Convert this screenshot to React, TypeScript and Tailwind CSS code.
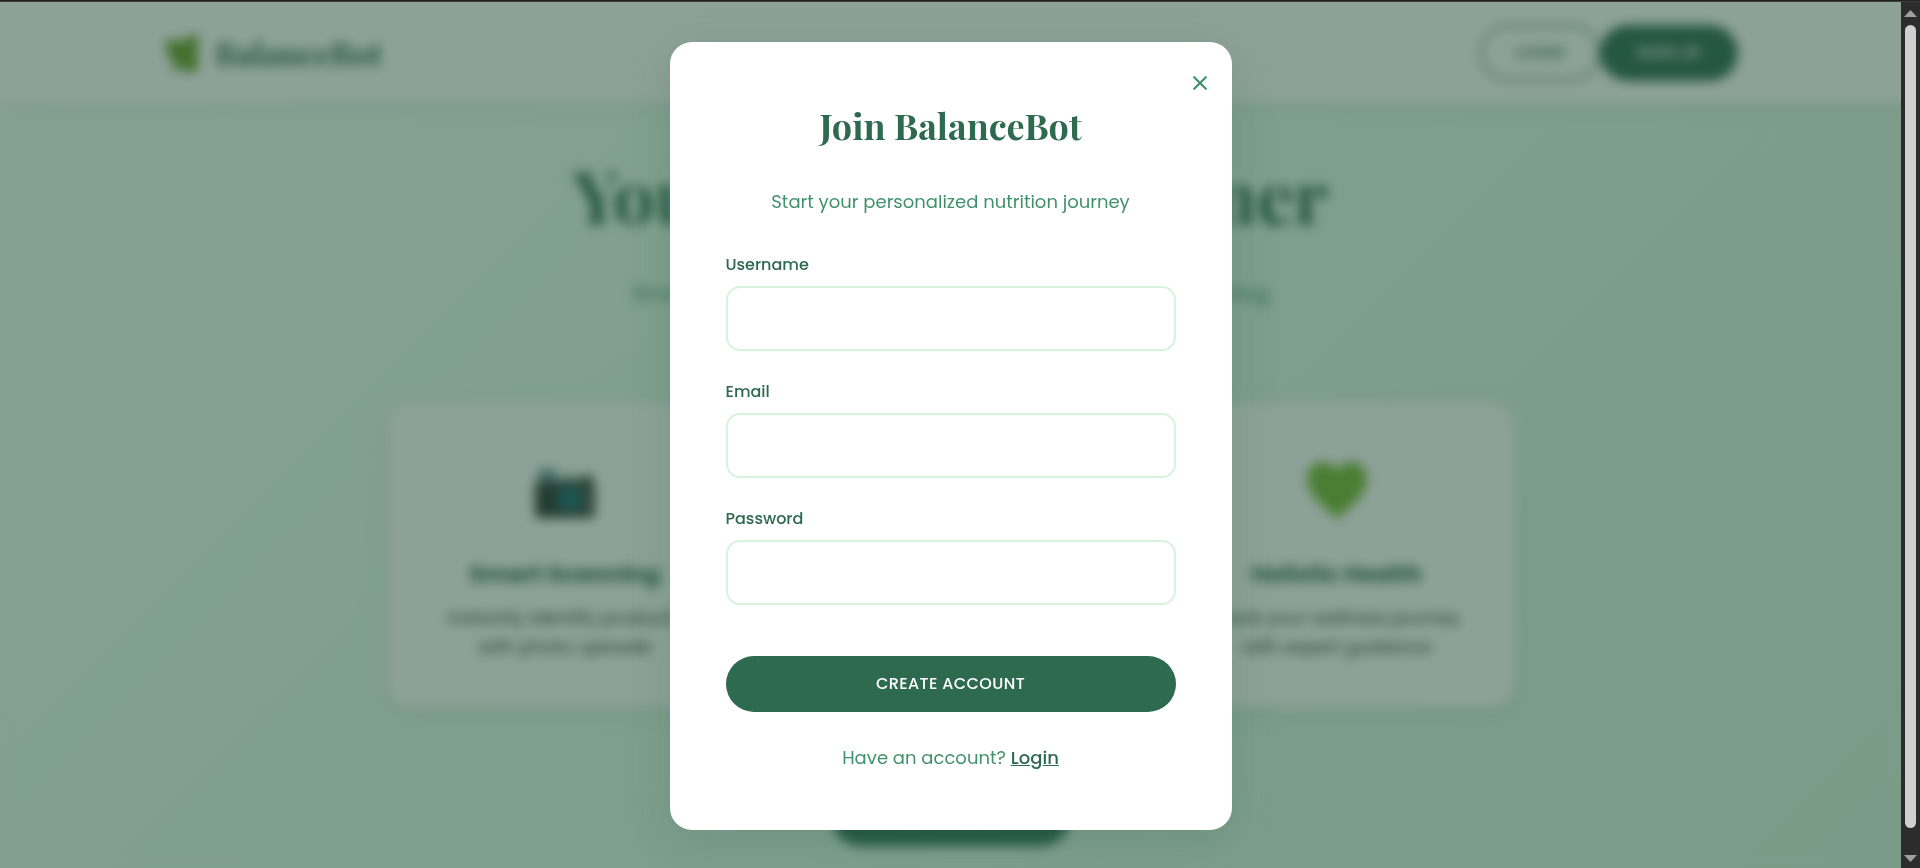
import { useState } from 'react';

const serif = "font-['Playfair_Display','Liberation_Serif',serif]";

const features = [
  { title: 'Smart Scanning', text: 'Instantly identify products with photo uploads', Icon: CameraIcon },
  { title: 'Meal Planning', text: 'Get balanced menus made for your goals', Icon: LeafIcon },
  { title: 'Holistic Health', text: 'Track your wellness journey with expert guidance', Icon: HeartIcon },
];

function LeafIcon({ className }: { className?: string }) {
  return (
    <svg viewBox="0 0 36 40" className={className} aria-hidden="true">
      <path d="M2 10 C7 5 14 7 18 9 C22 5 27 3 35 1 C36 8 35 14 33 18 C36 23 36 30 34 38 C27 40 19 38 13 34 C10 30 3 20 2 10 Z" fill="#6a9f26" />
      <path d="M32 4 C22 14 15 22 8 39" stroke="#5c9036" strokeWidth="2" fill="none" />
    </svg>
  );
}

function CameraIcon({ className }: { className?: string }) {
  return (
    <svg viewBox="0 0 64 64" className={className} aria-hidden="true">
      <rect x="5" y="10" width="19" height="11" rx="3" fill="#62909c" />
      <path d="M26 22 L31 15 H44 L48 22 Z" fill="#9fb8b2" />
      <path d="M48 23 L52 15 H58 L60 23 Z" fill="#37423f" />
      <rect x="2" y="22" width="60" height="37" rx="4" fill="#2a3431" />
      <rect x="50" y="24" width="10" height="33" rx="3" fill="#47514e" />
      <circle cx="37" cy="40" r="14" fill="#36504e" />
      <circle cx="37" cy="40" r="11" fill="#1a6c78" />
    </svg>
  );
}

function HeartIcon({ className }: { className?: string }) {
  return (
    <svg viewBox="0 0 64 64" className={className} aria-hidden="true">
      <path d="M32 61 C25 51 2 39 2 20 C2 9 9 3 17 3 C24 3 29 6 32 12 C35 6 40 3 47 3 C55 3 62 9 62 20 C62 39 39 51 32 61 Z" fill="#79b834" />
    </svg>
  );
}

function Header() {
  return (
    <header className="bg-white/95 shadow-[0_2px_20px_rgba(45,106,79,0.1)]">
      <div className="mx-auto flex h-[101px] max-w-[1575px] items-center justify-between">
        <div className="flex items-center gap-4">
          <LeafIcon className="h-10 w-9" />
          <span className={`${serif} text-[32px] font-bold text-[#2d6a4f]`}>BalanceBot</span>
        </div>
        <nav className="flex">
          <button type="button" className="h-14 w-[120px] rounded-full border-2 border-[#52796f] text-base font-medium tracking-wide text-[#2d6a4f]">
            LOGIN
          </button>
          <button type="button" className="h-14 w-[138px] rounded-full bg-[#2d6a4f] text-base font-medium tracking-wide text-white">
            SIGN UP
          </button>
        </nav>
      </div>
    </header>
  );
}

function Hero() {
  return (
    <section className="mx-auto flex max-w-[1126px] flex-col items-center pt-[43px] text-center">
      <h1 className={`${serif} text-[74px] leading-[96px] font-bold whitespace-nowrap text-[#2d6a4f]`}>Your Wellness Partner</h1>
      <p className="mt-9 text-[21px] leading-8 whitespace-nowrap text-[#40916c]">
        Smart nutrition guidance for balanced, conscious daily living
      </p>
      <div className="mt-[93px] grid w-full grid-cols-3 gap-8">
        {features.map(({ title, text, Icon }) => (
          <article key={title} className="flex h-[304px] flex-col items-center rounded-3xl bg-white px-10 pt-14 shadow-[0_6px_24px_rgba(45,106,79,0.1)]">
            <Icon className="size-16" />
            <h2 className="mt-[33px] text-[23px] leading-9 font-bold text-[#2d6a4f]">{title}</h2>
            <p className="mt-[11px] w-[260px] text-lg leading-[29px] text-[#2b332e]">{text}</p>
          </article>
        ))}
      </div>
      <button type="button" className="mt-[83px] h-14 w-[238px] rounded-full bg-[#2d6a4f] text-base font-medium tracking-wide text-white">
        GET STARTED
      </button>
    </section>
  );
}

interface FieldProps {
  id: string;
  label: string;
  type?: string;
  value: string;
  onChange: (value: string) => void;
}

function Field({ id, label, type = 'text', value, onChange }: FieldProps) {
  return (
    <div className="mb-[27px]">
      <label htmlFor={id} className="mb-[7px] block text-base leading-7 font-medium text-[#2d6a4f]">
        {label}
      </label>
      <input
        id={id}
        type={type}
        value={value}
        onChange={(e) => onChange(e.target.value)}
        className="block h-[65px] w-full rounded-[14px] border-2 border-[#d8f3dc] bg-white px-4 text-lg outline-none focus:border-[#40916c]"
      />
    </div>
  );
}

function SignUpModal({ onClose }: { onClose: () => void }) {
  const [username, setUsername] = useState('');
  const [email, setEmail] = useState('');
  const [password, setPassword] = useState('');

  return (
    <div className="absolute inset-0 flex items-center justify-center bg-[#1b4332]/50 pt-0.5 backdrop-blur-[6px]">
      <div
        role="dialog"
        aria-labelledby="signup-title"
        className="relative w-full max-w-[562px] rounded-[22px] bg-white p-14 text-center shadow-[0_10px_45px_rgba(45,106,79,0.2)]"
      >
        <button type="button" aria-label="Close" onClick={onClose} className="absolute top-[34px] right-[25px] text-[#40916c]">
          <svg viewBox="0 0 14 14" className="size-3.5" stroke="currentColor" strokeWidth="2.2" strokeLinecap="round">
            <path d="M1.2 1.2 L12.8 12.8 M12.8 1.2 L1.2 12.8" />
          </svg>
        </button>
        <h2 id="signup-title" className={`${serif} text-4xl leading-[54px] font-bold text-[#2d6a4f]`}>
          Join BalanceBot
        </h2>
        <p className="mt-[34px] mb-[33px] text-lg leading-8 text-[#40916c]">Start your personalized nutrition journey</p>
        <form onSubmit={(e) => e.preventDefault()}>
          <div className="text-left">
            <Field id="username" label="Username" value={username} onChange={setUsername} />
            <Field id="email" label="Email" type="email" value={email} onChange={setEmail} />
            <Field id="password" label="Password" type="password" value={password} onChange={setPassword} />
          </div>
          <button type="submit" className="mt-6 h-14 w-full rounded-full bg-[#2d6a4f] text-base font-medium tracking-wide text-white">
            CREATE ACCOUNT
          </button>
        </form>
        <p className="mt-[30px] text-lg leading-8 text-[#40916c]">
          Have an account?{' '}
          <a href="#login" className="font-medium text-[#2d6a4f] underline">
            Login
          </a>
        </p>
      </div>
    </div>
  );
}

function Scrollbar() {
  return (
    <div className="flex w-[19px] shrink-0 flex-col items-center bg-[#2c2c2c] pt-2 pb-1.5">
      <svg viewBox="0 0 13 7" className="h-[7px] w-[13px]" fill="#9f9f9f">
        <path d="M6.5 0 L13 7 H0 Z" />
      </svg>
      <div className="mt-2 mb-[27px] w-[11px] flex-1 rounded-full bg-[#d0d0d0]" />
      <svg viewBox="0 0 13 7" className="h-[7px] w-[13px]" fill="#9f9f9f">
        <path d="M0 0 H13 L6.5 7 Z" />
      </svg>
    </div>
  );
}

export default function App() {
  const [open, setOpen] = useState(true);

  return (
    <div className="flex h-screen flex-col font-['Poppins','Inter',sans-serif]">
      <div className="h-0.5 shrink-0 border-b border-[#3c3c3c] bg-[#232323]" />
      <div className="flex min-h-0 flex-1">
        <main className="relative min-w-0 flex-1 overflow-hidden bg-linear-135 from-[#f0fff4] to-[#d8f3dc]">
          <Header />
          <Hero />
          {open && <SignUpModal onClose={() => setOpen(false)} />}
        </main>
        <Scrollbar />
      </div>
    </div>
  );
}
